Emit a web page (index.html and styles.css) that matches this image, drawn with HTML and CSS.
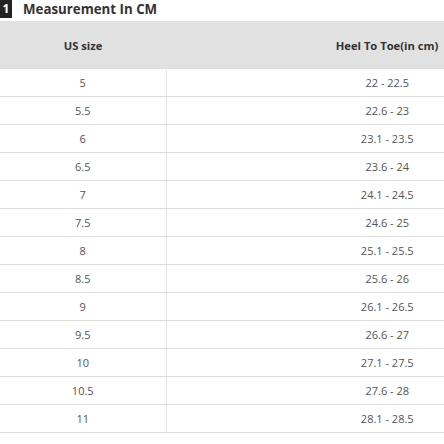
FILE: index.html
```html
<!DOCTYPE html>
<html>
<head>
<meta charset="utf-8">
<link rel="stylesheet" href="styles.css">
</head>
<body>
<div class="page">
  <div class="title"><span class="badge">1</span><span class="title-text">Measurement In CM</span></div>
  <table class="chart">
    <thead>
      <tr><th class="c1">US size</th><th class="c2">Heel To Toe(in cm)</th></tr>
    </thead>
    <tbody>
      <tr><td>5</td><td>22 - 22.5</td></tr>
      <tr><td>5.5</td><td>22.6 - 23</td></tr>
      <tr><td>6</td><td>23.1 - 23.5</td></tr>
      <tr><td>6.5</td><td>23.6 - 24</td></tr>
      <tr><td>7</td><td>24.1 - 24.5</td></tr>
      <tr><td>7.5</td><td>24.6 - 25</td></tr>
      <tr><td>8</td><td>25.1 - 25.5</td></tr>
      <tr><td>8.5</td><td>25.6 - 26</td></tr>
      <tr><td>9</td><td>26.1 - 26.5</td></tr>
      <tr><td>9.5</td><td>26.6 - 27</td></tr>
      <tr><td>10</td><td>27.1 - 27.5</td></tr>
      <tr><td>10.5</td><td>27.6 - 28</td></tr>
      <tr><td>11</td><td>28.1 - 28.5</td></tr>
    </tbody>
  </table>
</div>
</body>
</html>
```
FILE: styles.css
```css
html, body { margin: 0; padding: 0; background: #fff; overflow: hidden; }
.page { width: 444px; height: 444px; overflow: hidden; font-family: "Open Sans", "DejaVu Sans", sans-serif; }
.title { height: 21px; display: flex; align-items: flex-start; }
.badge { width: 12px; height: 18px; background: #222; color: #fff; font-weight: 700; font-size: 12px; line-height: 18px; text-align: center; }
.title-text { margin-left: 11px; font-weight: 700; font-size: 13.3px; line-height: 18px; color: #333; }
.chart { border-collapse: collapse; width: 608px; table-layout: fixed; }
.chart th { background: #e1e1e1; height: 48px; padding: 0; font-size: 11.2px; font-weight: 700; color: #333; text-align: center; }
.chart th.c1 { width: 166px; }
.chart td { height: 27px; padding: 0; font-size: 11px; color: #555; text-align: center; border-bottom: 1px solid #dcdcdc; }
.chart td:first-child { border-right: 1px solid #e6e6e6; }
```
